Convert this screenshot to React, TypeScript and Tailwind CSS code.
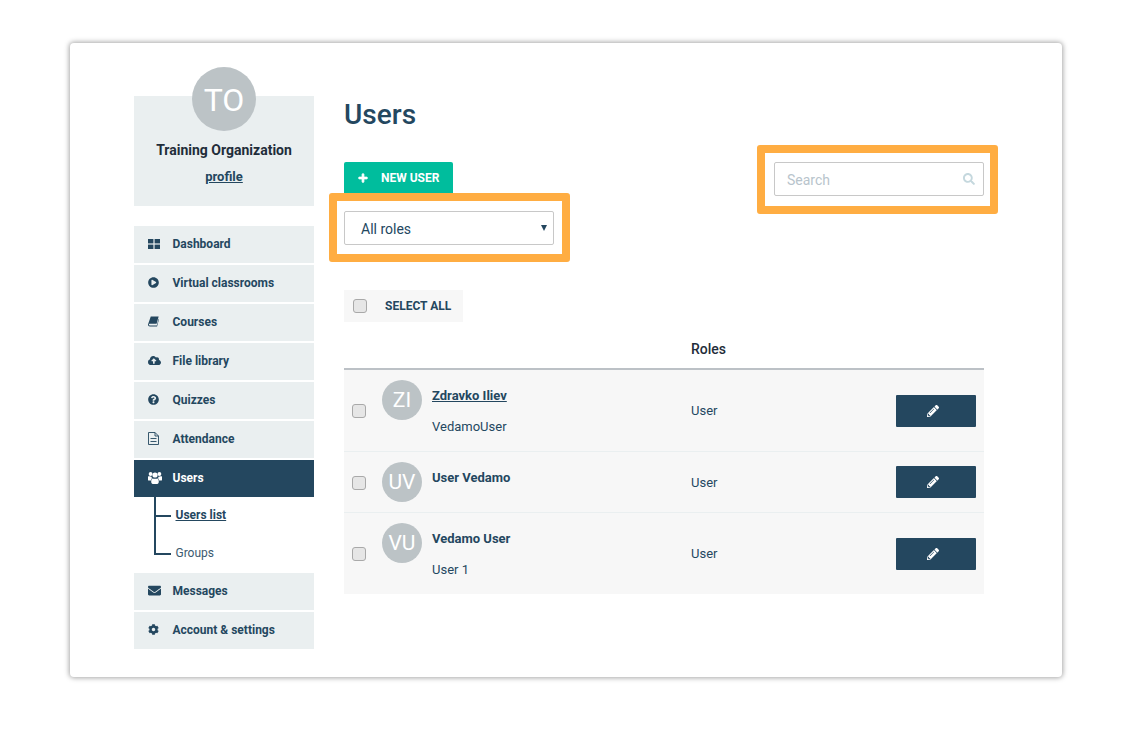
import { FaCloudUploadAlt, FaCog, FaEnvelope, FaPencilAlt, FaPlayCircle, FaPlus, FaQuestionCircle, FaSearch } from 'react-icons/fa';
import type { ReactNode } from 'react';

interface NavItem {
  name: string;
  icon: ReactNode;
}

const DashIcon = () => (
  <svg viewBox="0 0 12 10" className="w-[12px] h-[10px]" fill="currentColor">
    <rect x="0" y="0" width="5.4" height="4.4" />
    <rect x="6.6" y="0" width="5.4" height="4.4" />
    <rect x="0" y="5.6" width="5.4" height="4.4" />
    <rect x="6.6" y="5.6" width="5.4" height="4.4" />
  </svg>
);

const BookIcon = () => (
  <svg viewBox="0 0 12 11" className="w-[11px] h-[11px]" fill="currentColor">
    <path d="M3 0 H11.6 L9.4 8 H1.9 C1.2 8 1 8.4 1 8.8 C1 9.4 1.4 9.8 2 9.8 H9.6 L11.6 2.6 L12 3 L9.9 11 H2 C0.8 11 0 10 0 8.8 Z" />
  </svg>
);

const FileIcon = () => (
  <svg viewBox="0 0 11 13" className="w-[11px] h-[13px]" fill="none" stroke="currentColor" strokeWidth="0.9">
    <path d="M0.5 0.5 H7 L10.5 4 V12.5 H0.5 Z" />
    <path d="M7 0.5 V4 H10.5" />
    <path d="M2.5 6.5 H8.5 M2.5 9.5 H8.5" />
  </svg>
);

const UsersIcon = () => (
  <svg viewBox="0 0 14 12" className="w-[14px] h-[12px]" fill="currentColor">
    <circle cx="2.6" cy="2" r="1.9" />
    <circle cx="11.4" cy="2" r="1.9" />
    <circle cx="7" cy="3" r="2.6" />
    <path d="M0 4.6 C0.8 4 2.4 4.2 3.4 4.8 C3.6 5.6 4 6 4.2 6.2 C3.4 6.6 3 7.4 3 8.4 H0.6 C0 8.4 0 7.8 0 7.4 Z" />
    <path d="M14 4.6 C13.2 4 11.6 4.2 10.6 4.8 C10.4 5.6 10 6 9.8 6.2 C10.6 6.6 11 7.4 11 8.4 H13.4 C14 8.4 14 7.8 14 7.4 Z" />
    <path d="M4.4 6.4 C5.6 7 8.4 7 9.6 6.4 C10.4 6.8 10.8 8 10.8 9.6 C10.8 11 10.2 12 9.2 12 H4.8 C3.8 12 3.2 11 3.2 9.6 C3.2 8 3.6 6.8 4.4 6.4 Z" />
  </svg>
);

const topItems: NavItem[] = [
  { name: 'Dashboard', icon: <DashIcon /> },
  { name: 'Virtual classrooms', icon: <FaPlayCircle className="w-[11px] h-[11px]" /> },
  { name: 'Courses', icon: <BookIcon /> },
  { name: 'File library', icon: <FaCloudUploadAlt className="w-[13px] h-[13px]" /> },
  { name: 'Quizzes', icon: <FaQuestionCircle className="w-[11px] h-[11px]" /> },
  { name: 'Attendance', icon: <FileIcon /> },
];

const bottomItems: NavItem[] = [
  { name: 'Messages', icon: <FaEnvelope className="w-[13px] h-[13px]" /> },
  { name: 'Account & settings', icon: <FaCog className="w-[11px] h-[11px]" /> },
];

const users = [
  { initials: 'ZI', name: 'Zdravko Iliev', sub: 'VedamoUser', link: true, h: 'h-[81px]' },
  { initials: 'UV', name: 'User Vedamo', sub: '', link: false, h: 'h-[60px]' },
  { initials: 'VU', name: 'Vedamo User', sub: 'User 1', link: false, h: 'h-[81px]' },
];

function NavRow({ item, active }: { item: NavItem; active?: boolean }) {
  return (
    <div className={`flex items-center h-[37px] pb-[2px] pl-[14px] text-[12px] font-bold ${active ? 'bg-[#24475f] text-white' : 'bg-[#eaeff0] text-[#24475f]'}`}>
      <span className="w-[24.5px] flex items-center">{item.icon}</span>
      {item.name}
    </div>
  );
}

function Checkbox() {
  return <span className="block w-[14px] h-[14px] rounded-[3px] border border-[#a9a9a9] bg-[#e6e6e6] shrink-0" />;
}

export default function App() {
  return (
    <div className="min-h-[730px] bg-white pt-[43px] pl-[70px] font-['Roboto',sans-serif] text-[#24475f]">
      <div className="w-[992px] h-[634px] bg-white rounded-[4px] shadow-[0_0_5px_1px_rgba(0,0,0,0.35)] pl-[64px] flex">
        {/* Sidebar */}
        <aside className="w-[180px] shrink-0">
          <div className="mt-[53px] h-[110px] bg-[#eaeff0] flex flex-col items-center">
            <div className="-mt-[29px] w-[64px] h-[64px] rounded-full bg-[#bcc3c6] text-white text-[32px] pt-[2px] flex items-center justify-center">TO</div>
            <div className="mt-[10px] text-[14px] font-bold text-[#1f2d3a] leading-[18px]">Training Organization</div>
            <a className="mt-[9px] text-[13px] font-bold underline leading-[18px]">profile</a>
          </div>

          <nav className="mt-[20px] flex flex-col gap-[2px]">
            {topItems.map((item) => (
              <NavRow key={item.name} item={item} />
            ))}
            <div>
              <NavRow item={{ name: 'Users', icon: <UsersIcon /> }} active />
              <div className="flex h-[74px]">
                <div className="ml-[20px] w-[17px]">
                  <div className="h-[20px] border-l-2 border-b-2 border-[#24475f]" />
                  <div className="h-[38px] border-l-2 border-b-2 border-[#24475f]" />
                </div>
                <div className="ml-[4.5px] -mt-[1px] text-[12px]">
                  <div className="h-[38px] flex items-center font-bold underline">Users list</div>
                  <div className="h-[38px] flex items-center text-[#3c5a70]">Groups</div>
                </div>
              </div>
            </div>
            {bottomItems.map((item) => (
              <NavRow key={item.name} item={item} />
            ))}
          </nav>
        </aside>

        {/* Main */}
        <main className="ml-[30px] w-[640px] shrink-0">
          <h1 className="mt-[55px] text-[28px] leading-[34px] font-medium">Users</h1>

          <div className="mt-[30px] flex justify-between items-start">
            <div>
              <button className="flex items-center h-[31px] w-[109px] pl-[14px] bg-[#00bd9d] text-white text-[12px] font-bold rounded-t-[2px]">
                <FaPlus className="w-[10px] h-[10px] mr-[13px]" strokeWidth={40} />
                NEW USER
              </button>
              <div className="relative mt-[18px] w-[210px] h-[34px] border border-[#c8c8c8] rounded-[2px] flex items-center justify-between pl-[16px] pr-[6px] pt-[2px] text-[14px]">
                All roles
                <svg viewBox="0 0 6 6" className="w-[6px] h-[6px] -mt-[2px]" fill="currentColor">
                  <polygon points="0,0 6,0 3,6" />
                </svg>
                <div className="absolute -left-[16px] -top-[19px] w-[241px] h-[69px] border-[8px] border-[#ffad42] rounded-[3px]" />
              </div>
            </div>
            <div className="relative w-[210px] h-[34px] border border-[#c8c8c8] rounded-[2px] flex items-center justify-between pl-[12px] pr-[8px] text-[14px] text-[#b8c4cc]">
              <span className="pt-[2px]">Search</span>
              <FaSearch className="w-[12px] h-[12px] text-[#c5d8de]" />
              <div className="absolute -left-[18px] -top-[18px] w-[241px] h-[69px] border-[8px] border-[#ffad42] rounded-[3px]" />
            </div>
          </div>

          <div className="mt-[45px] w-[119px] h-[32px] bg-[#f7f7f7] flex items-center pl-[9px] gap-[18px] text-[12px] font-bold">
            <Checkbox />
            SELECT ALL
          </div>

          <div className="h-[48px] border-b-2 border-[#bcc1c6] pl-[347px] pt-[18px] text-[14px] font-medium leading-[18px] text-[#1f2d3a]">Roles</div>

          <div className="bg-[#f7f7f7] text-[13px] divide-y divide-[#eaeff0]">
            {users.map((u) => (
              <div key={u.initials} className={`box-content flex ${u.h} pl-[8px] pr-[8px]`}>
                <div className="w-[30px] pt-[1px] flex items-center"><Checkbox /></div>
                <div className="pt-[10px] w-[50px]">
                  <div className="w-[40px] h-[40px] pt-[2px] rounded-full bg-[#bcc3c6] text-white text-[21px] flex items-center justify-center">{u.initials}</div>
                </div>
                <div className="w-[259px] pt-[17px] leading-[18px]">
                  <div className={`font-bold ${u.link ? 'underline' : ''}`}>{u.name}</div>
                  {u.sub && <div className="mt-[13px]">{u.sub}</div>}
                </div>
                <div className="flex-1 pt-[1px] flex items-center">User</div>
                <div className="flex items-center">
                  <button className="w-[80px] h-[32px] pr-[6px] bg-[#24475f] rounded-[1px] text-white flex items-center justify-center">
                    <FaPencilAlt className="w-[12px] h-[12px]" />
                  </button>
                </div>
              </div>
            ))}
          </div>
        </main>
      </div>
    </div>
  );
}
